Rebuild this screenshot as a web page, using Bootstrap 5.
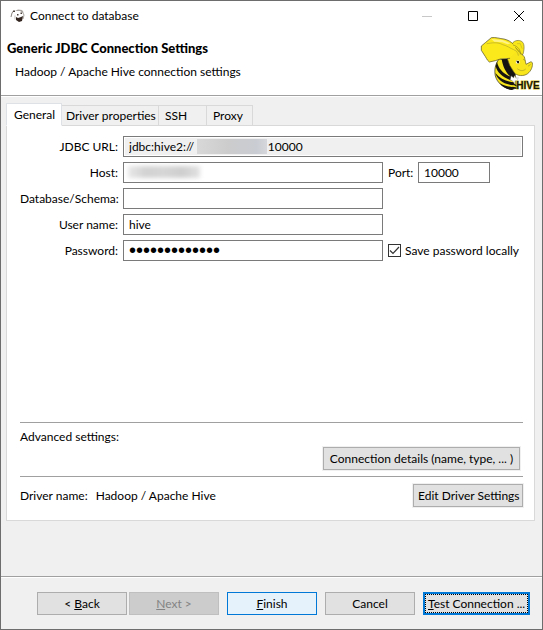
<!DOCTYPE html>
<html lang="en">
<head>
<meta charset="utf-8">
<meta name="viewport" content="width=device-width, initial-scale=1">
<title>Connect to database</title>
<link rel="stylesheet" href="https://cdn.jsdelivr.net/npm/bootstrap@5.3.0/dist/css/bootstrap.min.css">
<style>
  body { font-family: Lato, "Open Sans", sans-serif; font-size: 12px; line-height: 16px; color: #000; background: #f0f0f0; }
  .dialog { border: 1px solid #6d6d6d; }
  .title-row { height: 29px; padding-left: 9px; }
  .win-btn { width: 46px; height: 29px; padding: 0; border: 0; background: none; line-height: 0; }
  .banner { height: 66px; border-bottom: 1px solid #a0a0a0; padding: 2px 1px 0 6px; }
  .banner h1 { font-size: 13px; line-height: 18px; font-weight: 900; padding-top: 7px; }
  .banner p { padding: 7px 0 0 8px; }
  .work { padding: 6px 7px 0 5px; border-top: 1px solid #fff; }
  .tab-strip { padding: 0; border: 0; }
  .tab-strip .nav-link { font-size: 12px; line-height: 16px; height: 21px; padding: 2px 4px; color: #000; text-align: left; background: #f0f0f0; border: 1px solid #d9d9d9; border-left-width: 0; border-radius: 0; margin: 0; }
  .tab-strip .nav-link.active { height: 23px; padding: 2px 7px; background: #fff; border-left-width: 1px; border-bottom-color: #fff; z-index: 1; width: 56px; }
  .tab-strip .w-props { width: 97px; } .tab-strip .w-ssh { width: 48px; padding-left: 6px; } .tab-strip .w-proxy { width: 46px; padding-left: 6px; }
  .panel { background: #fff; border: 1px solid #d9d9d9; margin-top: -1px; padding: 10px 11px 13px 13px; }
  .form-area { display: grid; grid-template-columns: 98px minmax(0, 1fr) 135px; gap: 5px; min-height: 286px; align-content: start; align-items: center; }
  .form-area > label { text-align: right; white-space: nowrap; }
  .box { height: 21px; width: 100%; padding: 0 5px; font-size: 12px; line-height: 16px; color: #000; border: 1px solid #7a7a7a; border-radius: 0; background: #fff; }
  .box[readonly] { background: #f0f0f0; box-shadow: inset 0 0 0 1px #fff; }
  .box[type=password] { font-family: "Liberation Sans", sans-serif; font-size: 20px; }
  .box-port { width: 72px; }
  .port-cell { padding-right: 33px; }
  .masked { position: absolute; pointer-events: none; }
  .masked-url { left: 74px; top: 3px; width: 70px; height: 15px; background: linear-gradient(90deg, #d8d8d8, #cccccd 45%, #c9ccd2 85%, #d5d7dc); }
  .masked-host { left: 5px; top: 4px; width: 72px; height: 12px; background: linear-gradient(90deg, #e8e8e8, #d2d2d2 25%, #d6d6d6 50%, #cecece 75%, #e2e2e2); filter: blur(2px); }
  .tick { appearance: none; width: 13px; height: 13px; margin: 0; border: 1px solid #333; background: #fff; flex: none; }
  .tick:checked { background: #fff url("data:image/svg+xml,%3Csvg xmlns='http://www.w3.org/2000/svg' viewBox='0 0 11 11'%3E%3Cpath d='M1 5.5 4 8.5 10 2' fill='none' stroke='%23333' stroke-width='1.2'/%3E%3C/svg%3E"); }
  .rule { border-top: 1px solid #a0a0a0; }
  .push { height: 23px; min-width: 90px; padding: 0 4px; font-size: 12px; line-height: 16px; color: #000; border: 1px solid #adadad; border-radius: 0; background: #e1e1e1; white-space: nowrap; }
  .push:disabled { color: #838383; border-color: #bfbfbf; background: #ccc; opacity: 1; }
  .push-default { border-color: #0078d7; background: #e5f1fb; }
  .push-focus { border: 2px solid #0078d7; padding: 0 3px; width: 107px; outline: 1px dotted #000; outline-offset: -3px; }
  .advanced { min-height: 54px; padding: 6px 3px 6px 0; }
  .driver { padding-top: 7px; }
  .halo { box-shadow: 0 0 0 1px #f0f0f0; }
  .w-details { width: 197px; } .w-edit { width: 110px; }
  .actions { border-top: 1px solid #a0a0a0; box-shadow: inset 0 1px #fff; padding: 15px 12px 14px; gap: 8px; }
</style>
</head>
<body>
<div class="dialog min-vh-100 d-flex flex-column">
  <header class="bg-white">
    <div class="title-row d-flex align-items-center">
      <svg class="flex-shrink-0" width="16" height="16" viewBox="0 0 16 16" aria-hidden="true">
        <path d="M1 9 2 5 3.500 3" fill="none" stroke="#8a837e" stroke-width="1"/>
        <path d="M5 3 8 1.500 12 2 13.500 4 13 5 10 3 7 3Z" fill="#a8a39f"/>
        <path d="M12.500 4 14 7 13 11" fill="none" stroke="#aaa5a1"/>
        <path d="M3 2.500h2v1.500h-2ZM7 6h1.500v1.500h-1.500ZM10.500 4.500h1.500v1.500h-1.500Z" fill="#4b423d"/>
        <path d="M6 9 8 10 11 9 13 8 12 13 9 14 6 12Z" fill="#32251f"/>
        <path d="M5 7.500v4" stroke="#c5c0bc"/>
      </svg>
      <span class="flex-grow-1 ps-1">Connect to database</span>
      <button class="win-btn" type="button" aria-label="Minimize" disabled><svg width="10" height="10"><path d="M0 5.500h10" stroke="#c8c8c8"/></svg></button>
      <button class="win-btn" type="button" aria-label="Maximize"><svg width="10" height="10"><path d="M.5.500h9v9h-9z" fill="none" stroke="#000"/></svg></button>
      <button class="win-btn" type="button" aria-label="Close"><svg width="10" height="10"><path d="M0 0 10 10M10 0 0 10" stroke="#000"/></svg></button>
    </div>
    <div class="banner d-flex justify-content-between">
      <div>
        <h1 class="m-0">Generic JDBC Connection Settings</h1>
        <p class="m-0">Hadoop / Apache Hive connection settings</p>
      </div>
      <svg class="mt-1 flex-shrink-0" width="61" height="56" viewBox="15 17 183 168" role="img" aria-label="Hive">
        <g stroke-linejoin="round" stroke-linecap="round">
          <path d="M72 86C61 100 57 119 61 137 67 157 83 174 113 177L124 173 122 140 112 100Z" fill="#f6e51c" stroke="#252313" stroke-width="2"/>
          <path d="M80 86 102 86C104 103 110 117 122 132L116 144C98 137 84 114 80 86ZM66 94C70 116 88 134 116 142L116 152C90 147 66 128 62 108ZM61 128C76 146 96 154 119 156L116 165C88 163 66 148 61 128ZM74 158C90 168 108 170 121 172L111 179C94 177 82 170 74 158Z" fill="#161410"/>
          <path d="M112 39C118 29 133 28 141 34 148 39 149 53 144 72L130 77 116 55Z" fill="#fae719" stroke="#77702a" stroke-width="2"/>
          <path d="M101 44 119 49 134 66 148 79 153 102 168 94 172 97C174 109 168 122 158 130 145 139 126 137 118 127L104 105 96 82Z" fill="#f8e51b" stroke="#5d5720" stroke-width="2"/>
          <path d="M49 22C63 20 74 25 87 26 103 31 115 37 121 49L122 64 104 84 76 86 61 91 43 95C35 89 33 80 28 74L19 60V47L31 37Z" fill="#fce91c"/>
          <path d="M104 84 76 86 61 91 43 95C35 89 33 80 28 74L19 60V47L31 37 49 22C63 20 74 25 87 26 99 29 108 34 113 40" fill="none" stroke="#4b461d" stroke-width="2"/>
          <path d="M36 40C52 37 69 35 83 43 96 46 106 54 116 58 124 61 129 66 130 75" fill="none" stroke="#b0a428" stroke-width="2"/>
          <path d="M49 26 58 34 82 36 98 42 106 39 83 29Z" fill="#fff388"/>
          <path d="M127 40 136 40 141 54" fill="none" stroke="#c4b620" stroke-width="2"/>
          <path d="M115 44C129 49 137 58 136 71" fill="none" stroke="#8d8424" stroke-width="2"/>
          <ellipse cx="128" cy="95" rx="6" ry="5" fill="#fff"/>
          <path d="M124 91 132 92 132 99H127Z" fill="#16150f"/>
          <path d="M145 87 151 91M128 116C136 122 144 123 151 117M160 107 166 103" fill="none" stroke="#a3982a" stroke-width="2"/>
          <path d="M109 137 116 143 119 136 123 144 130 142 126 152 120 151 119 161 114 153 106 148Z" fill="#fff" stroke="#999" stroke-width="1"/>
          <path d="M113 171 126 174M118 163 127 167" stroke="#171510" stroke-width="4"/>
        </g>
        <text x="124" y="176" font-family="'Liberation Sans', sans-serif" font-size="30" font-weight="700" fill="#16140b" stroke="#d7c52e" stroke-width="3" paint-order="stroke">HIVE</text>
      </svg>
    </div>
  </header>

  <main class="work flex-grow-1">
    <ul class="nav nav-tabs tab-strip align-items-end flex-nowrap" role="tablist">
      <li class="nav-item" role="presentation"><button class="nav-link active position-relative" type="button" role="tab" aria-selected="true">General</button></li>
      <li class="nav-item" role="presentation"><button class="nav-link w-props text-nowrap" type="button" role="tab">Driver properties</button></li>
      <li class="nav-item" role="presentation"><button class="nav-link w-ssh" type="button" role="tab">SSH</button></li>
      <li class="nav-item" role="presentation"><button class="nav-link w-proxy" type="button" role="tab">Proxy</button></li>
    </ul>
    <section class="panel">
      <form class="form-area">
        <label for="url">JDBC URL:</label>
        <div class="position-relative" style="grid-column: span 2">
          <input class="box d-block" id="url" type="text" readonly value="jdbc:hive2://&nbsp;&nbsp;&nbsp;&nbsp;&nbsp;&nbsp;&nbsp;&nbsp;&nbsp;&nbsp;&nbsp;&nbsp;&nbsp;&nbsp;&nbsp;&nbsp;&nbsp;&nbsp;&nbsp;&nbsp;&nbsp;&nbsp;&nbsp;&nbsp;10000">
          <span class="masked masked-url"></span>
        </div>
        <label for="host">Host:</label>
        <div class="position-relative">
          <input class="box d-block" id="host" type="text">
          <span class="masked masked-host"></span>
        </div>
        <div class="port-cell d-flex align-items-center justify-content-between">
          <label for="port">Port:</label>
          <input class="box box-port" id="port" type="text" value="10000">
        </div>
        <label for="schema">Database/Schema:</label>
        <input class="box" id="schema" type="text">
        <span></span>
        <label for="user">User name:</label>
        <input class="box" id="user" type="text" value="hive">
        <span></span>
        <label for="pass">Password:</label>
        <input class="box" id="pass" type="password" value="hivepassword1" autocomplete="off">
        <div class="d-flex align-items-center gap-1 text-nowrap">
          <input class="tick" id="save" type="checkbox" checked>
          <label for="save">Save password locally</label>
        </div>
      </form>
      <div class="rule advanced d-flex justify-content-between">
        <span>Advanced settings:</span>
        <button class="push halo w-details align-self-end" type="button">Connection details (name, type, ... )</button>
      </div>
      <div class="rule driver d-flex align-items-center">
        <span>Driver name:</span>
        <span class="ms-2 flex-grow-1">Hadoop / Apache Hive</span>
        <button class="push halo w-edit" type="button">Edit Driver Settings</button>
      </div>
    </section>
  </main>

  <footer class="actions d-flex justify-content-end">
    <div class="d-flex" style="gap: 2px">
      <button class="push" type="button">&lt; <u>B</u>ack</button>
      <button class="push" type="button" disabled><u>N</u>ext &gt;</button>
    </div>
    <button class="push push-default" type="button"><u>F</u>inish</button>
    <button class="push" type="button">Cancel</button>
    <button class="push push-focus" type="button"><u>T</u>est Connection ...</button>
  </footer>
</div>
<script src="https://cdn.jsdelivr.net/npm/bootstrap@5.3.0/dist/js/bootstrap.bundle.min.js"></script>
</body>
</html>
